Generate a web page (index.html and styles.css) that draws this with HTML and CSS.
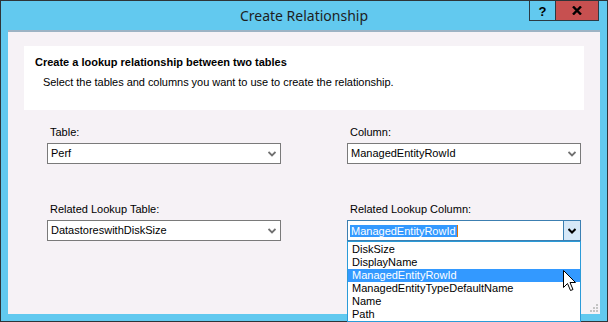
FILE: index.html
```html
<!DOCTYPE html>
<html lang="en">
<head>
  <meta charset="UTF-8">
  <title>Create Relationship</title>
  <link rel="stylesheet" href="styles.css">
</head>
<body>
  <div class="window">
    <div class="titlebar">
      <div></div>
      <div class="title">Create Relationship</div>
      <div class="caption-buttons">
        <div class="cap-btn help">?</div>
        <div class="cap-btn close">
          <svg width="10" height="9" viewBox="0 0 10 9"><path d="M1 0.5 L9 8.5 M9 0.5 L1 8.5" stroke="#000" stroke-width="2.4"/></svg>
        </div>
      </div>
    </div>

    <div class="client">
      <div class="intro">
        <h1>Create a lookup relationship between two tables</h1>
        <p>Select the tables and columns you want to use to create the relationship.</p>
      </div>

      <div class="fields">
        <div class="field">
          <label>Table:</label>
          <div class="combo">
            <span>Perf</span>
            <svg class="chev" width="8" height="6" viewBox="0 0 8 6"><path d="M0.5 1 L4 4.5 L7.5 1" fill="none" stroke="#707070" stroke-width="1.8"/></svg>
          </div>
        </div>
        <div class="field">
          <label>Column:</label>
          <div class="combo">
            <span>ManagedEntityRowId</span>
            <svg class="chev" width="8" height="6" viewBox="0 0 8 6"><path d="M0.5 1 L4 4.5 L7.5 1" fill="none" stroke="#707070" stroke-width="1.8"/></svg>
          </div>
        </div>
        <div class="field">
          <label>Related Lookup Table:</label>
          <div class="combo">
            <span>DatastoreswithDiskSize</span>
            <svg class="chev" width="8" height="6" viewBox="0 0 8 6"><path d="M0.5 1 L4 4.5 L7.5 1" fill="none" stroke="#707070" stroke-width="1.8"/></svg>
          </div>
        </div>
        <div class="field">
          <label>Related Lookup Column:</label>
          <div class="combo active">
            <span class="selected">ManagedEntityRowId</span>
            <div class="drop-btn">
              <svg width="8" height="6" viewBox="0 0 8 6"><path d="M0.5 1 L4 4.5 L7.5 1" fill="none" stroke="#000" stroke-width="2"/></svg>
            </div>
            <ul class="droplist">
              <li>DiskSize</li>
              <li>DisplayName</li>
              <li class="hover">ManagedEntityRowId</li>
              <li>ManagedEntityTypeDefaultName</li>
              <li>Name</li>
              <li>Path</li>
            </ul>
          </div>
        </div>
      </div>

      <!-- mouse pointer over the open list -->
      <svg class="pointer" width="14" height="22" viewBox="0 0 14 22">
        <path d="M0.5 0.5 L0.5 17.5 L4.5 13.5 L7.5 20.5 L10 19.5 L7 12.5 L12.5 12.5 Z" fill="#fff" stroke="#000" stroke-width="1"/>
      </svg>

      <svg class="grip" width="9" height="9" viewBox="0 0 9 9" fill="#c4c4c4">
        <rect x="7" y="1" width="2" height="2"/>
        <rect x="4" y="4" width="2" height="2"/><rect x="7" y="4" width="2" height="2"/>
        <rect x="1" y="7" width="2" height="2"/><rect x="4" y="7" width="2" height="2"/><rect x="7" y="7" width="2" height="2"/>
      </svg>
    </div>
  </div>
</body>
</html>
```

FILE: styles.css
```css
body {
  margin: 0;
  overflow: hidden;
  font-family: 'Liberation Sans', Arial, sans-serif;
  font-size: 11px;
  color: #000;
}

.window {
  width: 608px;
  height: 322px;
  box-sizing: border-box;
  border: 1px solid #2e3438;
  background: #62c9ef;
  padding: 0 7px 7px;
  display: flex;
  flex-direction: column;
}

/* title bar */
.titlebar {
  height: 29px;
  display: grid;
  grid-template-columns: 1fr auto 1fr;
  align-items: start;
}

.title {
  font-family: 'Noto Sans', sans-serif;
  font-size: 14px;
  line-height: 18px;
  padding-top: 6px;
  color: #1e1e1e;
}

.caption-buttons {
  justify-self: end;
  display: flex;
  margin-right: 1px;
}

.cap-btn {
  height: 19px;
  border: 1px solid #2b3a44;
  border-top: none;
  display: flex;
  align-items: center;
  justify-content: center;
}

.help {
  width: 27px;
  font-weight: bold;
  font-size: 13px;
  padding-top: 1px;
  box-sizing: border-box;
  height: 20px;
}

.close {
  width: 42px;
  border-left: none;
  background: #c75050;
}

/* client area */
.client {
  flex: 1;
  position: relative;
  background: #f6f2f6;
  border-top: 2px solid #9db3c4;
  padding: 14px 16px 0;
}

.intro {
  height: 64px;
  box-sizing: border-box;
  background: #fff;
  padding: 10px 11px 0;
}

.intro h1 {
  margin: 0;
  font-size: 11px;
  line-height: 13px;
  font-weight: bold;
}

.intro p {
  margin: 7px 0 0 8px;
  line-height: 13px;
  letter-spacing: -0.04px;
}

.fields {
  display: grid;
  grid-template-columns: 234px 234px;
  column-gap: 66px;
  row-gap: 39px;
  margin: 16px 0 0 23px;
}

.field label {
  display: block;
  line-height: 13px;
  margin-bottom: 4px;
  padding-left: 3px;
}

.combo {
  position: relative;
  height: 21px;
  box-sizing: border-box;
  border: 1px solid #7a7a7a;
  background: #fff;
  padding-left: 3px;
  line-height: 19px;
  display: flex;
  align-items: center;
  justify-content: space-between;
}

.combo .chev {
  margin-right: 4px;
  margin-top: 1px;
}

.combo.active {
  border-color: #3c7fb1;
  padding-left: 2px;
}

.selected {
  background: #3399ff;
  color: #fff;
  line-height: 12px;
  padding: 0 1px;
  border-right: 1px solid #e67300;
}

.drop-btn {
  align-self: stretch;
  width: 16px;
  border-left: 1px solid #3c7fb1;
  background: #d6e8f8;
  display: flex;
  align-items: center;
  justify-content: center;
}

.droplist {
  position: absolute;
  top: 20px;
  left: -1px;
  width: 234px;
  box-sizing: border-box;
  margin: 0;
  padding: 1px 0 0;
  list-style: none;
  background: #fff;
  border: 1px solid #2b9bd8;
  z-index: 2;
}

.droplist li {
  height: 13px;
  line-height: 13px;
  padding-left: 4px;
}

.droplist li.hover {
  background: #3399ff;
  color: #fff;
}

.pointer {
  position: absolute;
  left: 555px;
  top: 238px;
  z-index: 3;
}

.grip {
  position: absolute;
  right: 2px;
  bottom: 2px;
}
```
